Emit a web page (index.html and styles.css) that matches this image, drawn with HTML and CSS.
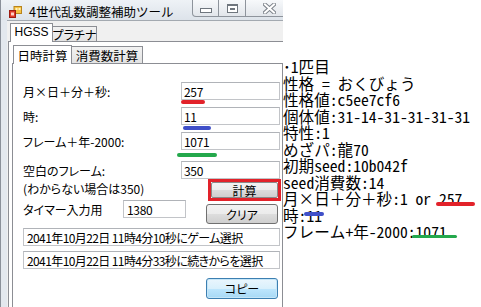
FILE: index.html
```html
<!DOCTYPE html>
<html lang="ja">
<head>
    <meta charset="UTF-8">
    <title>4世代乱数調整補助ツール</title>
    <link rel="stylesheet" href="styles.css">
</head>
<body>
    <div class="screen">
        <div class="window">
            <div class="titlebar">
                <svg class="app-icon" width="13" height="12" viewBox="0 0 13 12">
                    <rect x="5" y="0.5" width="7.5" height="7" fill="#f6c343" stroke="#b8841c"/>
                    <rect x="6.5" y="2" width="2" height="2" fill="#fff3c0"/>
                    <rect x="9.5" y="2" width="2" height="2" fill="#fff3c0"/>
                    <rect x="0.5" y="4.5" width="6" height="7" fill="#e03a2a" stroke="#9c1c12"/>
                    <rect x="2" y="6.5" width="3" height="3" fill="#ffd0c8"/>
                </svg>
                <span class="title">4世代乱数調整補助ツール</span>
                <div class="caption">
                    <span class="cap cap-min"><i></i></span>
                    <span class="cap cap-max"><i></i></span>
                    <span class="cap cap-close">
                        <svg width="13" height="11" viewBox="0 0 13 11">
                            <path d="M2 1.5 L11 9.5 M11 1.5 L2 9.5" stroke="#7d838b" stroke-width="4" stroke-linecap="square"/>
                            <path d="M2 1.5 L11 9.5 M11 1.5 L2 9.5" stroke="#fff" stroke-width="2" stroke-linecap="square"/>
                        </svg>
                    </span>
                </div>
            </div>

            <div class="client">
                <div class="tabctl outer">
                    <div class="tabstrip">
                        <span class="tab tab-hgss active">HGSS</span>
                        <span class="tab tab-pt">プラチナ</span>
                    </div>
                    <div class="tabpage">
                        <div class="tabctl inner">
                            <div class="tabstrip">
                                <span class="tab tab-date active">日時計算</span>
                                <span class="tab tab-count">消費数計算</span>
                            </div>
                            <div class="tabpage form">
                                <div class="row r-first">
                                    <label class="lbl lbl-wide">月×日＋分＋秒:</label>
                                    <input class="textbox tb-right" type="text" value="257" readonly>
                                </div>
                                <div class="row r-near">
                                    <label class="lbl lbl-wide">時:</label>
                                    <input class="textbox tb-right" type="text" value="11" readonly>
                                </div>
                                <div class="row r-near">
                                    <label class="lbl lbl-wide">フレーム＋年-2000:</label>
                                    <input class="textbox tb-right" type="text" value="1071" readonly>
                                </div>
                                <div class="row r-blank">
                                    <label class="lbl lbl-wide">空白のフレーム:</label>
                                    <input class="textbox tb-right" type="text" value="350" readonly>
                                </div>
                                <div class="row r-calc">
                                    <label class="lbl lbl-note">(わからない場合は350)</label>
                                    <div class="calc-wrap">
                                        <button class="btn btn-calc">計算</button>
                                    </div>
                                </div>
                                <div class="row r-timer">
                                    <label class="lbl lbl-timer">タイマー入力用</label>
                                    <input class="textbox tb-timer" type="text" value="1380" readonly>
                                    <button class="btn btn-clear">クリア</button>
                                </div>
                                <div class="row r-out1">
                                    <input class="textbox tb-out" type="text" value="2041年10月22日 11時4分10秒にゲーム選択" readonly>
                                </div>
                                <div class="row r-out2">
                                    <input class="textbox tb-out" type="text" value="2041年10月22日 11時4分33秒に続きからを選択" readonly>
                                </div>
                                <div class="row r-copy">
                                    <button class="btn btn-copy">コピー</button>
                                </div>
                            </div>
                        </div>
                    </div>
                </div>
            </div>
        </div>

        <div class="result">
            <div class="line">･1匹目</div>
            <div class="line">性格 = おくびょう</div>
            <div class="line">性格値:c5ee7cf6</div>
            <div class="line">個体値:31-14-31-31-31-31</div>
            <div class="line">特性:1</div>
            <div class="line">めざパ:龍70</div>
            <div class="line">初期seed:10b042f</div>
            <div class="line">seed消費数:14</div>
            <div class="line">月×日＋分＋秒:1 or 257</div>
            <div class="line">時:11</div>
            <div class="line">フレーム+年-2000:1071</div>
        </div>

        <span class="mark mark-red-left"></span>
        <span class="mark mark-blue-left"></span>
        <span class="mark mark-green-left"></span>
        <span class="mark mark-red-right"></span>
        <span class="mark mark-blue-right"></span>
        <span class="mark mark-green-right"></span>
    </div>
</body>
</html>
```

FILE: styles.css
```css
:root {
    --frame: #e3e8ee;
    --frame-line: #8a9099;
    --tab-line: #8c8e94;
    --box-line: #c2c4c8;
    --mark-red: #e2222a;
    --mark-blue: #3f4fc8;
    --mark-green: #24a84c;
}

* {
    margin: 0;
    padding: 0;
    box-sizing: border-box;
}

body {
    width: 481px;
    height: 307px;
    overflow: hidden;
    background: #fff;
    font-family: "Noto Sans CJK JP", sans-serif;
    color: #000;
}

.screen {
    position: relative;
    display: flex;
    width: 481px;
    height: 307px;
    overflow: hidden;
    background: #fff;
}

/* window */

.window {
    width: 283px;
    flex: none;
    display: flex;
    flex-direction: column;
    background: var(--frame);
    border-left: 1px solid var(--frame-line);
}

.titlebar {
    height: 25px;
    display: flex;
    align-items: flex-start;
    background: linear-gradient(#eef2f6, #dde3ea);
}

.app-icon {
    margin: 6px 0 0 8px;
}

.title {
    margin: 4px 0 0 7px;
    font-size: 12.5px;
    line-height: 16px;
    white-space: nowrap;
}

.caption {
    margin-left: auto;
    display: flex;
    width: 91px;
    overflow: hidden;
}

.cap {
    height: 17px;
    display: flex;
    align-items: center;
    justify-content: center;
    border: 1px solid #8e949c;
    border-top: none;
    border-left: none;
    background: linear-gradient(#f7f9fb, #e2e6eb);
    flex: none;
}

.cap-min {
    width: 27px;
    border-left: 1px solid #8e949c;
    border-radius: 0 0 0 4px;
}

.cap-min i {
    display: block;
    width: 12px;
    height: 5px;
    margin-top: 4px;
    border: 1px solid #6f767e;
    background: #fff;
}

.cap-max {
    width: 27px;
}

.cap-max i {
    display: block;
    width: 11px;
    height: 9px;
    border: 1px solid #6f767e;
    border-top-width: 2px;
    background: #fff;
    box-shadow: inset 0 0 0 2px #fff, inset 0 0 0 3px #6f767e;
}

.cap-close {
    width: 48px;
    justify-content: flex-start;
    padding-left: 17px;
}

.client {
    flex: 1;
    margin-left: 6px;
    background: #f0f0f0;
    border-top: 1px solid #a3a9b0;
}

/* tabs */

.tabctl.outer {
    margin-left: 1px;
}

.tabctl.inner {
    margin-left: 3px;
}

.tabstrip {
    display: flex;
    align-items: flex-end;
}

.outer > .tabstrip {
    height: 20px;
    padding-left: 2px;
}

.inner > .tabstrip {
    height: 21px;
    padding-left: 1px;
}

.tab {
    height: 15px;
    display: flex;
    align-items: center;
    justify-content: center;
    border: 1px solid var(--tab-line);
    border-bottom: none;
    background: linear-gradient(#f2f2f2, #e3e3e3);
    font-size: 12px;
    line-height: 13px;
    white-space: nowrap;
    font-feature-settings: "palt";
}

.tab.active {
    height: 19px;
    margin-bottom: -1px;
    background: #fff;
    position: relative;
    z-index: 1;
}

.tab-hgss { width: 43px; padding-bottom: 2px; font-family: "Liberation Sans", sans-serif; }
.tab-pt { width: 44px; border-left: none; }
.tab-date { width: 59px; height: 21px; font-size: 12.5px; }
.tab-count { width: 71px; height: 17px; border-left: none; font-size: 12.5px; }

.tabpage {
    background: #fff;
    border-top: 1px solid var(--tab-line);
    border-left: 1px solid var(--tab-line);
}

.outer > .tabpage {
    height: 400px;
}

.inner > .tabpage {
    border-right: 1px solid var(--tab-line);
    height: 400px;
}

/* form */

.form {
    display: flex;
    flex-direction: column;
    padding: 18px 0 0 10px;
}

.row {
    display: flex;
    align-items: center;
}

.r-near { margin-top: 7px; }
.r-blank { margin-top: 11px; }
.r-calc { align-items: flex-start; }
.r-timer { margin-top: -1px; align-items: flex-start; }
.r-out1 { margin-top: 4px; }
.r-out2 { margin-top: 5px; }
.r-copy { margin-top: 9px; }

.lbl {
    font-size: 12px;
    line-height: 13px;
    white-space: nowrap;
    font-feature-settings: "palt";
}

.lbl-wide { width: 158px; }
.lbl-note { width: 185px; margin-top: 3px; }
.lbl-timer { width: 100px; margin-top: 3px; }

.textbox {
    height: 18px;
    border: 1px solid var(--box-line);
    border-top-color: #b0b3b8;
    background: #fff;
    padding: 0 2px;
    font-family: "Noto Sans CJK JP", sans-serif;
    font-size: 12px;
    letter-spacing: -0.3px;
    font-feature-settings: "palt";
    color: #000;
    outline: none;
}

.tb-right { width: 99px; }
.tb-timer { width: 63px; padding-left: 3px; }
.tb-out { width: 257px; padding-left: 3px; letter-spacing: -0.6px; }

.btn {
    height: 20px;
    border: 1px solid #707070;
    border-radius: 3px;
    background: linear-gradient(#f2f2f2 0%, #ebebeb 50%, #dddddd 50%, #cfcfcf 100%);
    font-family: "Noto Sans CJK JP", sans-serif;
    font-size: 12px;
    line-height: 13px;
    color: #000;
    font-feature-settings: "palt";
}

.calc-wrap {
    width: 73px;
    height: 22px;
    border: 3px solid var(--mark-red);
    display: flex;
}

.btn-calc {
    flex: 1;
    height: auto;
    border-radius: 2px;
    border-color: #8a8a8a;
}

.btn-clear {
    width: 72px;
    margin: 4px 0 0 20px;
}

.btn-copy {
    width: 72px;
    height: 21px;
    margin-left: 183px;
    border-color: #3c7fb1;
    background: linear-gradient(#eaf6fd 0%, #d9f0fc 50%, #bee6fd 50%, #a7d9f5 100%);
    box-shadow: inset 0 0 0 1px #c6e6f8;
}

/* result text */

.result {
    flex: 1;
    padding-top: 58px;
    font-family: "Noto Sans Mono CJK JP", "Noto Sans CJK JP", monospace;
    font-size: 15.6px;
    line-height: 16.5px;
}

.line {
    white-space: pre;
}

/* hand drawn marks */

.mark {
    position: absolute;
    height: 4px;
    border-radius: 2px;
}

.mark-red-left { left: 181px; top: 100px; width: 24px; background: var(--mark-red); }
.mark-blue-left { left: 183px; top: 126px; width: 28px; background: var(--mark-blue); }
.mark-green-left { left: 177px; top: 153px; width: 40px; background: var(--mark-green); }
.mark-red-right { left: 436px; top: 202px; width: 39px; background: var(--mark-red); }
.mark-blue-right { left: 304px; top: 212px; width: 20px; background: var(--mark-blue); }
.mark-green-right { left: 412px; top: 235px; width: 45px; height: 3px; background: var(--mark-green); }
```
